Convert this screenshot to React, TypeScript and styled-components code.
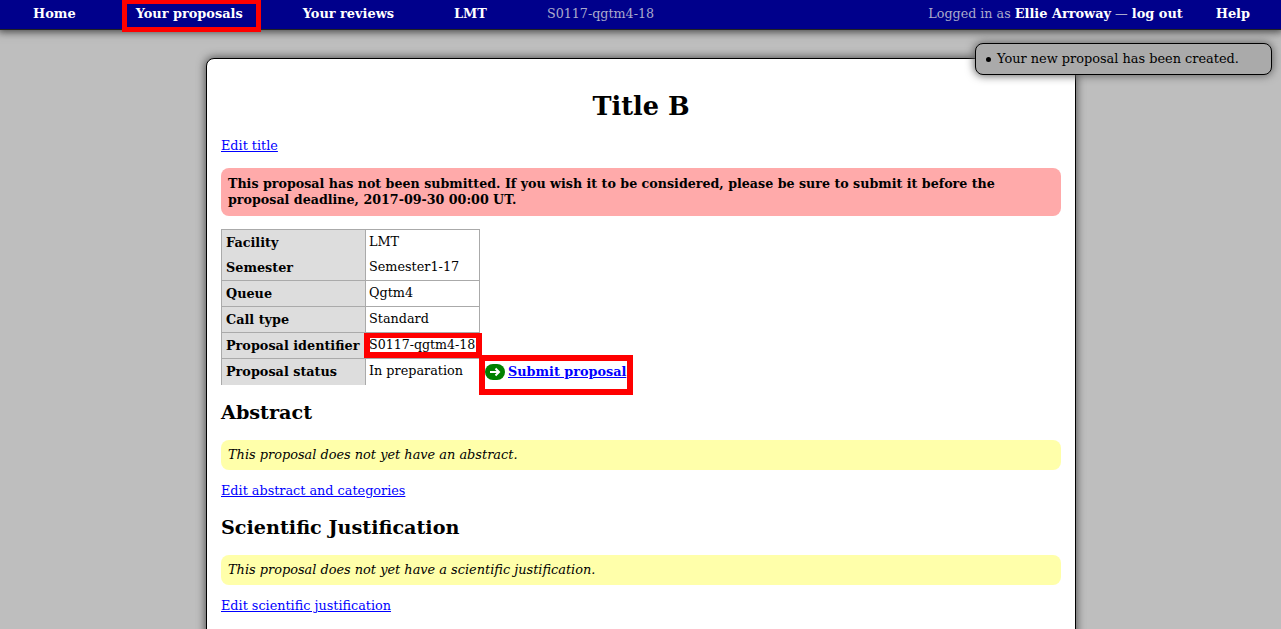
import React from "react";
import styled, { createGlobalStyle } from "styled-components";

const GlobalStyle = createGlobalStyle`
	html, body {
		margin: 0;
		padding: 0;
		height: 629px;
		overflow: hidden;
		background: #bebebe;
		font-family: "DejaVu Serif", serif;
		font-size: 12.8px;
		color: #000;
	}
`;

const NavBar = styled.nav`
	position: relative;
	z-index: 2;
	display: flex;
	align-items: center;
	gap: 60px;
	box-sizing: border-box;
	height: 30px;
	padding: 0 31px 3px 33px;
	background: #00008b;
	border-bottom: 1px solid #222;
	box-shadow: 0 0 8px 2px #444;
	font-size: 12.9px;
	white-space: nowrap;
`;
const NavItem = styled.a<{ $marked?: boolean }>`
	position: relative;
	color: #fff;
	font-weight: bold;
	${(p) =>
		p.$marked &&
		`&::after {
			content: "";
			position: absolute;
			left: -14px;
			right: -18px;
			top: -7px;
			height: 33px;
			border: 5px solid #f00;
			box-sizing: border-box;
		}`}
`;
const NavMuted = styled.span`
	color: #aaaacc;
	font-size: 12.7px;
`;
const NavRight = styled.div`
	margin-left: auto;
	display: flex;
	gap: 33px;
`;
const White = styled.b`
	color: #fff;
	font-size: 12.9px;
`;

const Card = styled.main`
	box-sizing: border-box;
	width: 870px;
	height: 700px;
	margin: 28px 0 0 206px;
	padding: 14px;
	background: #fff;
	border: 1px solid #000;
	border-radius: 8px;
	box-shadow: 0 0 8px 1px #555;
`;
const Title = styled.h1`
	margin: 20px 0 16px;
	text-align: center;
	font-size: 25.6px;
	line-height: 27px;
`;
const LinkLine = styled.p`
	margin: 11px 0 0;
	line-height: 19px;
`;
const Link = styled.a`
	color: #00f;
	text-decoration: underline;
`;
const Warning = styled.div`
	margin-top: 13px;
	padding: 8px 7px;
	background: #ffaaaa;
	border-radius: 8px;
	font-size: 12.66px;
	font-weight: bold;
	line-height: 16px;
`;
const Note = styled.div`
	margin-top: 14px;
	padding: 0 7px;
	height: 30px;
	line-height: 29px;
	background: #ffffaa;
	border-radius: 8px;
	font-size: 12.9px;
	font-style: italic;
`;
const Heading = styled.h2`
	margin: 15px 0 0;
	font-size: 19.2px;
	line-height: 26px;
`;
const InfoTable = styled.table`
	margin: 13px 0 15px;
	border-collapse: collapse;
	line-height: 16px;
`;
const Th = styled.th<{ $noTop?: boolean; $noBottom?: boolean }>`
	box-sizing: border-box;
	width: 144px;
	height: ${(p) => (p.$noTop ? 25 : 26)}px;
	padding: 0 4px;
	text-align: left;
	background: #dddddd;
	white-space: nowrap;
	border: 1px solid #aaa;
	${(p) => p.$noTop && "border-top: none;"}
	${(p) => p.$noBottom && "border-bottom: none;"}
`;
const Td = styled.td<{ $noTop?: boolean; $noBottom?: boolean; $noRight?: boolean; $marked?: boolean }>`
	position: relative;
	box-sizing: border-box;
	width: 114px;
	height: ${(p) => (p.$noTop ? 25 : 26)}px;
	padding: ${(p) => (p.$noTop ? 3 : 4)}px 2px 0 3px;
	vertical-align: top;
	white-space: nowrap;
	border: 1px solid #aaa;
	${(p) => p.$noTop && "border-top: none;"}
	${(p) => p.$noBottom && "border-bottom: none;"}
	${(p) => p.$noRight && "border-right: none;"}
	${(p) =>
		p.$marked &&
		`font-size: 12.6px;
		&::after {
			content: "";
			position: absolute;
			left: -2px;
			right: -3px;
			top: 0;
			bottom: 0;
			border: 6px solid #f00;
			border-top-width: 5px;
			border-bottom-width: 6px;
		}`}
`;
const SubmitCell = styled.td`
	position: relative;
	box-sizing: border-box;
	height: 26px;
	padding: 5px 0 0 5px;
	vertical-align: top;
	white-space: nowrap;
	&::after {
		content: "";
		position: absolute;
		left: -1px;
		right: -7px;
		top: -4px;
		bottom: -10px;
		border: 6px solid #f00;
	}
`;
const SubmitLink = styled(Link)`
	display: flex;
	align-items: flex-start;
	gap: 3.5px;
	font-weight: bold;
`;
const ArrowPill = styled.svg`
	flex: none;
`;
const Toast = styled.ul`
	position: absolute;
	z-index: 3;
	top: 43px;
	left: 975px;
	box-sizing: border-box;
	width: 297px;
	height: 32px;
	margin: 0;
	padding: 0 0 0 10px;
	list-style: none;
	background: #aaaaaa;
	border: 1px solid #000;
	border-radius: 8px;
	box-shadow: 0 0 8px 1px #666;
	font-size: 12.9px;
	line-height: 29px;
`;
const ToastItem = styled.li`
	&::before {
		content: "";
		display: inline-block;
		width: 5px;
		height: 5px;
		margin: 0 6px 1px 0;
		border-radius: 50%;
		background: #000;
	}
`;

export default function App() {
	return (
		<>
			<GlobalStyle />
			<NavBar>
				<NavItem>Home</NavItem>
				<NavItem $marked>Your proposals</NavItem>
				<NavItem>Your reviews</NavItem>
				<NavItem>LMT</NavItem>
				<NavMuted>S0117-qgtm4-18</NavMuted>
				<NavRight>
					<NavMuted>
						Logged in as <White>Ellie Arroway</White> — <White>log out</White>
					</NavMuted>
					<White>Help</White>
				</NavRight>
			</NavBar>
			<Toast>
				<ToastItem>Your new proposal has been created.</ToastItem>
			</Toast>
			<Card>
				<Title>Title B</Title>
				<LinkLine>
					<Link>Edit title</Link>
				</LinkLine>
				<Warning>
					This proposal has not been submitted. If you wish it to be considered, please be sure to submit it before the proposal deadline, 2017-09-30 00:00 UT.
				</Warning>
				<InfoTable>
					<tbody>
						<tr>
							<Th $noBottom>Facility</Th>
							<Td $noBottom>LMT</Td>
						</tr>
						<tr>
							<Th $noTop>Semester</Th>
							<Td $noTop>Semester1-17</Td>
						</tr>
						<tr>
							<Th>Queue</Th>
							<Td>Qgtm4</Td>
						</tr>
						<tr>
							<Th>Call type</Th>
							<Td>Standard</Td>
						</tr>
						<tr>
							<Th>Proposal identifier</Th>
							<Td $marked>S0117-qgtm4-18</Td>
						</tr>
						<tr>
							<Th $noBottom>Proposal status</Th>
							<Td $noBottom $noRight>In preparation</Td>
							<SubmitCell>
								<SubmitLink>
									<ArrowPill width="20" height="16" viewBox="0 0 20 16">
										<rect width="20" height="16" rx="8" fill="#008000" />
										<path d="M5 8h9M10.500 4.500 14 8l-3.500 3.500" fill="none" stroke="#fff" strokeWidth="2" />
									</ArrowPill>
									Submit proposal
								</SubmitLink>
							</SubmitCell>
						</tr>
					</tbody>
				</InfoTable>
				<Heading>Abstract</Heading>
				<Note>This proposal does not yet have an abstract.</Note>
				<LinkLine>
					<Link>Edit abstract and categories</Link>
				</LinkLine>
				<Heading>Scientific Justification</Heading>
				<Note>This proposal does not yet have a scientific justification.</Note>
				<LinkLine>
					<Link>Edit scientific justification</Link>
				</LinkLine>
			</Card>
		</>
	);
}
